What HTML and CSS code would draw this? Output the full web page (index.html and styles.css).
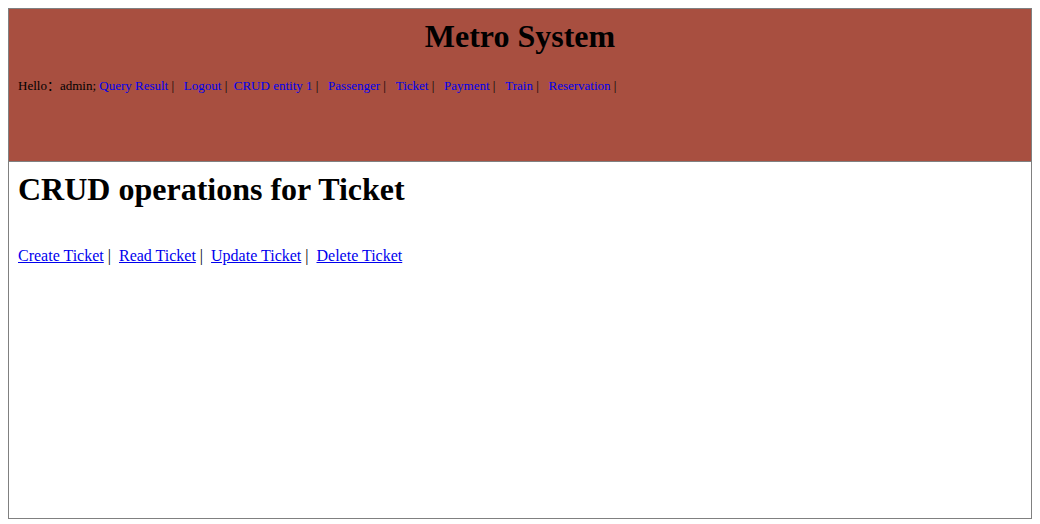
FILE: index.html
```html
<!DOCTYPE html>
<html>
<head>
<meta charset="utf-8">
<link rel="stylesheet" href="styles.css">
</head>
<body>
<div class="frame">
  <div class="header">
    <h1 class="site-title">Metro System</h1>
    <div class="nav">Hello<span class="cjk">：</span>admin; <a href="#">Query Result</a> |&nbsp;&nbsp;&nbsp;<a href="#">Logout</a> |&nbsp;&nbsp;<a href="#">CRUD entity 1</a> |&nbsp;&nbsp;&nbsp;<a href="#">Passenger</a> |&nbsp;&nbsp;&nbsp;<a href="#">Ticket</a> |&nbsp;&nbsp;&nbsp;<a href="#">Payment</a> |&nbsp;&nbsp;&nbsp;<a href="#">Train</a> |&nbsp;&nbsp;&nbsp;<a href="#">Reservation</a> |</div>
  </div>
  <div class="content">
    <h1 class="page-title">CRUD operations for Ticket</h1>
    <div class="ops"><a href="#">Create Ticket</a> |&nbsp;&nbsp;<a href="#">Read Ticket</a> |&nbsp;&nbsp;<a href="#">Update Ticket</a> |&nbsp;&nbsp;<a href="#">Delete Ticket</a></div>
  </div>
</div>
</body>
</html>
```
FILE: styles.css
```css
html, body {
  margin: 0;
  padding: 0;
  background: #fff;
}
body {
  padding: 8px;
  font-family: "Liberation Serif", "Times New Roman", serif;
  color: #000;
}
.frame {
  width: 1022px;
  height: 509px;
  border: 1px solid #808080;
  display: flex;
  flex-direction: column;
}
.header {
  background: #a84f40;
  height: 152px;
  border-bottom: 1px solid #808080;
  padding: 0 9px;
}
.site-title {
  font-size: 32px;
  text-align: center;
  margin: 9px 0 0 0;
}
.nav {
  font-size: 13px;
  line-height: 15px;
  margin-top: 23px;
}
.cjk {
  font-family: "Noto Sans CJK SC", sans-serif;
  font-size: 13px;
  line-height: 0;
}
a {
  color: #0000ee;
}
.nav a {
  text-decoration: none;
}
.content {
  padding: 0 9px;
}
.page-title {
  font-size: 32px;
  margin: 9px 0 0 0;
}
.ops {
  font-size: 16px;
  margin-top: 39px;
}
```
